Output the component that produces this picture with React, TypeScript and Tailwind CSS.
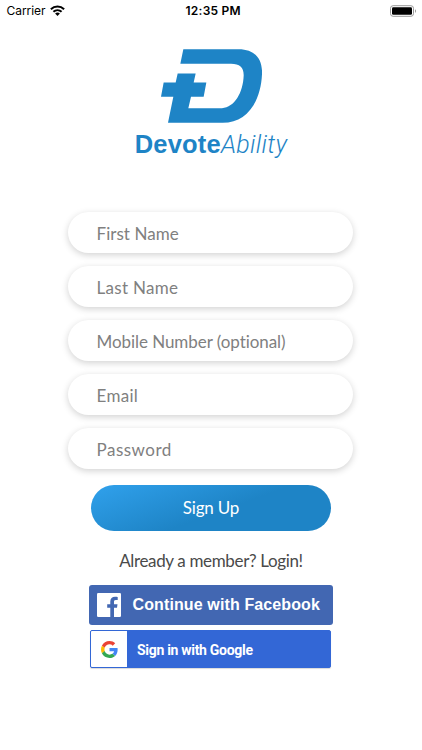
import type { ReactNode } from 'react';

interface FieldProps {
  placeholder: string;
  className: string;
  type?: string;
}

const Field = ({ placeholder, className, type = 'text' }: FieldProps) => (
  <input
    type={type}
    placeholder={placeholder}
    className={`block h-[41.5px] w-[285px] rounded-full bg-white pl-[28.5px] pt-[3px] font-[Lato,sans-serif] text-[17px] text-[#7d7d7d] outline-none placeholder:text-[#808080] shadow-[0_2px_7px_rgba(0,0,0,0.18)] ${className}`}
  />
);

const StatusBar = () => (
  <div className="relative flex h-[22px] items-center justify-between pl-[6.5px] pr-[5px] font-[Inter,sans-serif] text-black">
    <div className="flex items-center gap-[5px]">
      <span className="text-[12px] tracking-[-0.05px]">Carrier</span>
      <svg className="-mt-px" width="15" height="11" viewBox="0 0 15 11" fill="none" stroke="black">
        <path d="M0.9 4.2a9.6 9.6 0 0 1 13.2 0" strokeWidth="2.1" />
        <path d="M3.4 6.8a6 6 0 0 1 8.2 0" strokeWidth="2" />
        <path d="M7.5 11 5.1 8.6a3.4 3.4 0 0 1 4.8 0z" fill="black" stroke="none" />
      </svg>
    </div>
    <span className="absolute left-[185.5px] text-[12px] font-semibold tracking-[0.25px]">12:35 PM</span>
    <svg className="-mt-px" width="27" height="12" viewBox="0 0 27 12">
      <rect x="0.5" y="0.7" width="23" height="10.6" rx="2.6" fill="none" stroke="#999" />
      <rect x="2" y="2.2" width="20" height="7.6" rx="1.3" fill="black" />
      <path d="M25 4.2c1.4.5 1.4 3.1 0 3.6z" fill="#999" />
    </svg>
  </div>
);

const Logo = () => (
  <div className="flex flex-col items-center text-[#1e84c6]">
    <svg width="101" height="74" viewBox="107 28 303 221" fill="currentColor">
      <path d="M174 28H340C389 28 412 57 410 103C406 188 363 249 292 249H128L144 171H107L115 128H151L157 101H211L205 128H243L235 171H197L189 205H290C328 203 353 158 355 108C356 84 344 72 317 72H165Z" />
    </svg>
    <div className="mt-[7px] whitespace-nowrap text-[24px] leading-[28px]">
      <span className="font-['Liberation_Sans',sans-serif] text-[25.5px] font-bold tracking-[0.2px]">Devote</span>
      <span className="font-[Roboto,sans-serif] text-[25px] font-light italic tracking-[0.3px]">Ability</span>
    </div>
  </div>
);

const SocialButton = ({ className, children }: { className: string; children: ReactNode }) => (
  <button className={`flex items-center text-white ${className}`}>{children}</button>
);

const FacebookIcon = () => (
  <svg width="24" height="24" viewBox="0 0 24 24">
    <rect width="24" height="24" rx="1.3" fill="white" />
    <path
      d="M13.3 24V14.8H10.2V11.2H13.3V8.5C13.3 5.4 15.2 3.7 18 3.7C19.3 3.7 20.4 3.8 20.7 3.9V7.1H18.8C17.3 7.1 17 7.9 17 8.9V11.2H20.5L20 14.8H17V24Z"
      fill="#4267b2"
    />
  </svg>
);

const GoogleIcon = () => (
  <svg width="17" height="17" viewBox="0 0 48 48">
    <path fill="#EA4335" d="M24 9.5c3.54 0 6.71 1.22 9.21 3.6l6.85-6.85C35.9 2.38 30.47 0 24 0 14.62 0 6.51 5.38 2.56 13.22l7.98 6.19C12.43 13.72 17.74 9.5 24 9.5z" />
    <path fill="#4285F4" d="M46.98 24.55c0-1.57-.15-3.09-.38-4.55H24v9.02h12.94c-.58 2.96-2.26 5.48-4.78 7.18l7.73 6c4.51-4.18 7.09-10.36 7.09-17.65z" />
    <path fill="#FBBC05" d="M10.53 28.59c-.48-1.45-.76-2.99-.76-4.59s.27-3.14.76-4.59l-7.98-6.19C.92 16.46 0 20.12 0 24c0 3.88.92 7.54 2.56 10.78l7.97-6.19z" />
    <path fill="#34A853" d="M24 48c6.48 0 11.93-2.13 15.89-5.81l-7.73-6c-2.15 1.45-4.92 2.3-8.16 2.3-6.26 0-11.57-4.22-13.47-9.91l-7.98 6.19C6.51 42.62 14.62 48 24 48z" />
  </svg>
);

const App = () => (
  <main className="flex h-[750px] w-[422px] flex-col overflow-hidden bg-white">
    <StatusBar />

    <div className="mt-[27px]">
      <Logo />
    </div>

    <form className="mt-[52.5px] flex flex-col items-center">
      <div className="mr-px flex flex-col gap-[12.5px]">
        <Field placeholder="First Name" className="tracking-[0.05px]" />
        <Field placeholder="Last Name" className="tracking-[0.3px]" />
        <Field placeholder="Mobile Number (optional)" className="tracking-[-0.06px]" />
        <Field placeholder="Email" className="tracking-[0.3px]" />
        <Field placeholder="Password" type="password" className="tracking-[0.5px]" />
      </div>

      <button
        type="button"
        className="mt-[15.5px] h-[46px] w-[240px] rounded-full bg-[linear-gradient(160deg,#30a1ec_0%,#1e84c6_55%)] pt-px font-[Lato,sans-serif] text-[17px] tracking-[-0.2px] text-white"
      >
        Sign Up
      </button>
      <a href="#login" className="mt-[18px] font-[Lato,sans-serif] text-[17px] leading-6 tracking-[-0.35px] text-[#4a4a4a]">
        Already a member? Login!
      </a>
    </form>

    {/* Social logins */}
    <div className="mt-[12.5px] flex flex-col items-center gap-[5.5px]">
      <SocialButton className="h-[39.5px] w-[244px] rounded-[3px] bg-[#4267b2] pl-2">
        <FacebookIcon />
        <span className="ml-[11.5px] whitespace-nowrap pt-px font-['Liberation_Sans',sans-serif] text-[16px] font-bold tracking-[0.12px]">
          Continue with Facebook
        </span>
      </SocialButton>
      <SocialButton className="mr-px h-[38px] w-[241px] rounded-[2px] border border-[#3367d6] bg-[#3367d6] shadow-[0_1px_1px_rgba(0,0,0,0.15)]">
        <span className="flex h-full w-9 items-center justify-center rounded-l-[1px] bg-white">
          <GoogleIcon />
        </span>
        <span className="ml-[10px] whitespace-nowrap pt-[2px] font-[Roboto,sans-serif] text-[14px] font-bold tracking-[-0.3px]">
          Sign in with Google
        </span>
      </SocialButton>
    </div>
  </main>
);

export default App;
